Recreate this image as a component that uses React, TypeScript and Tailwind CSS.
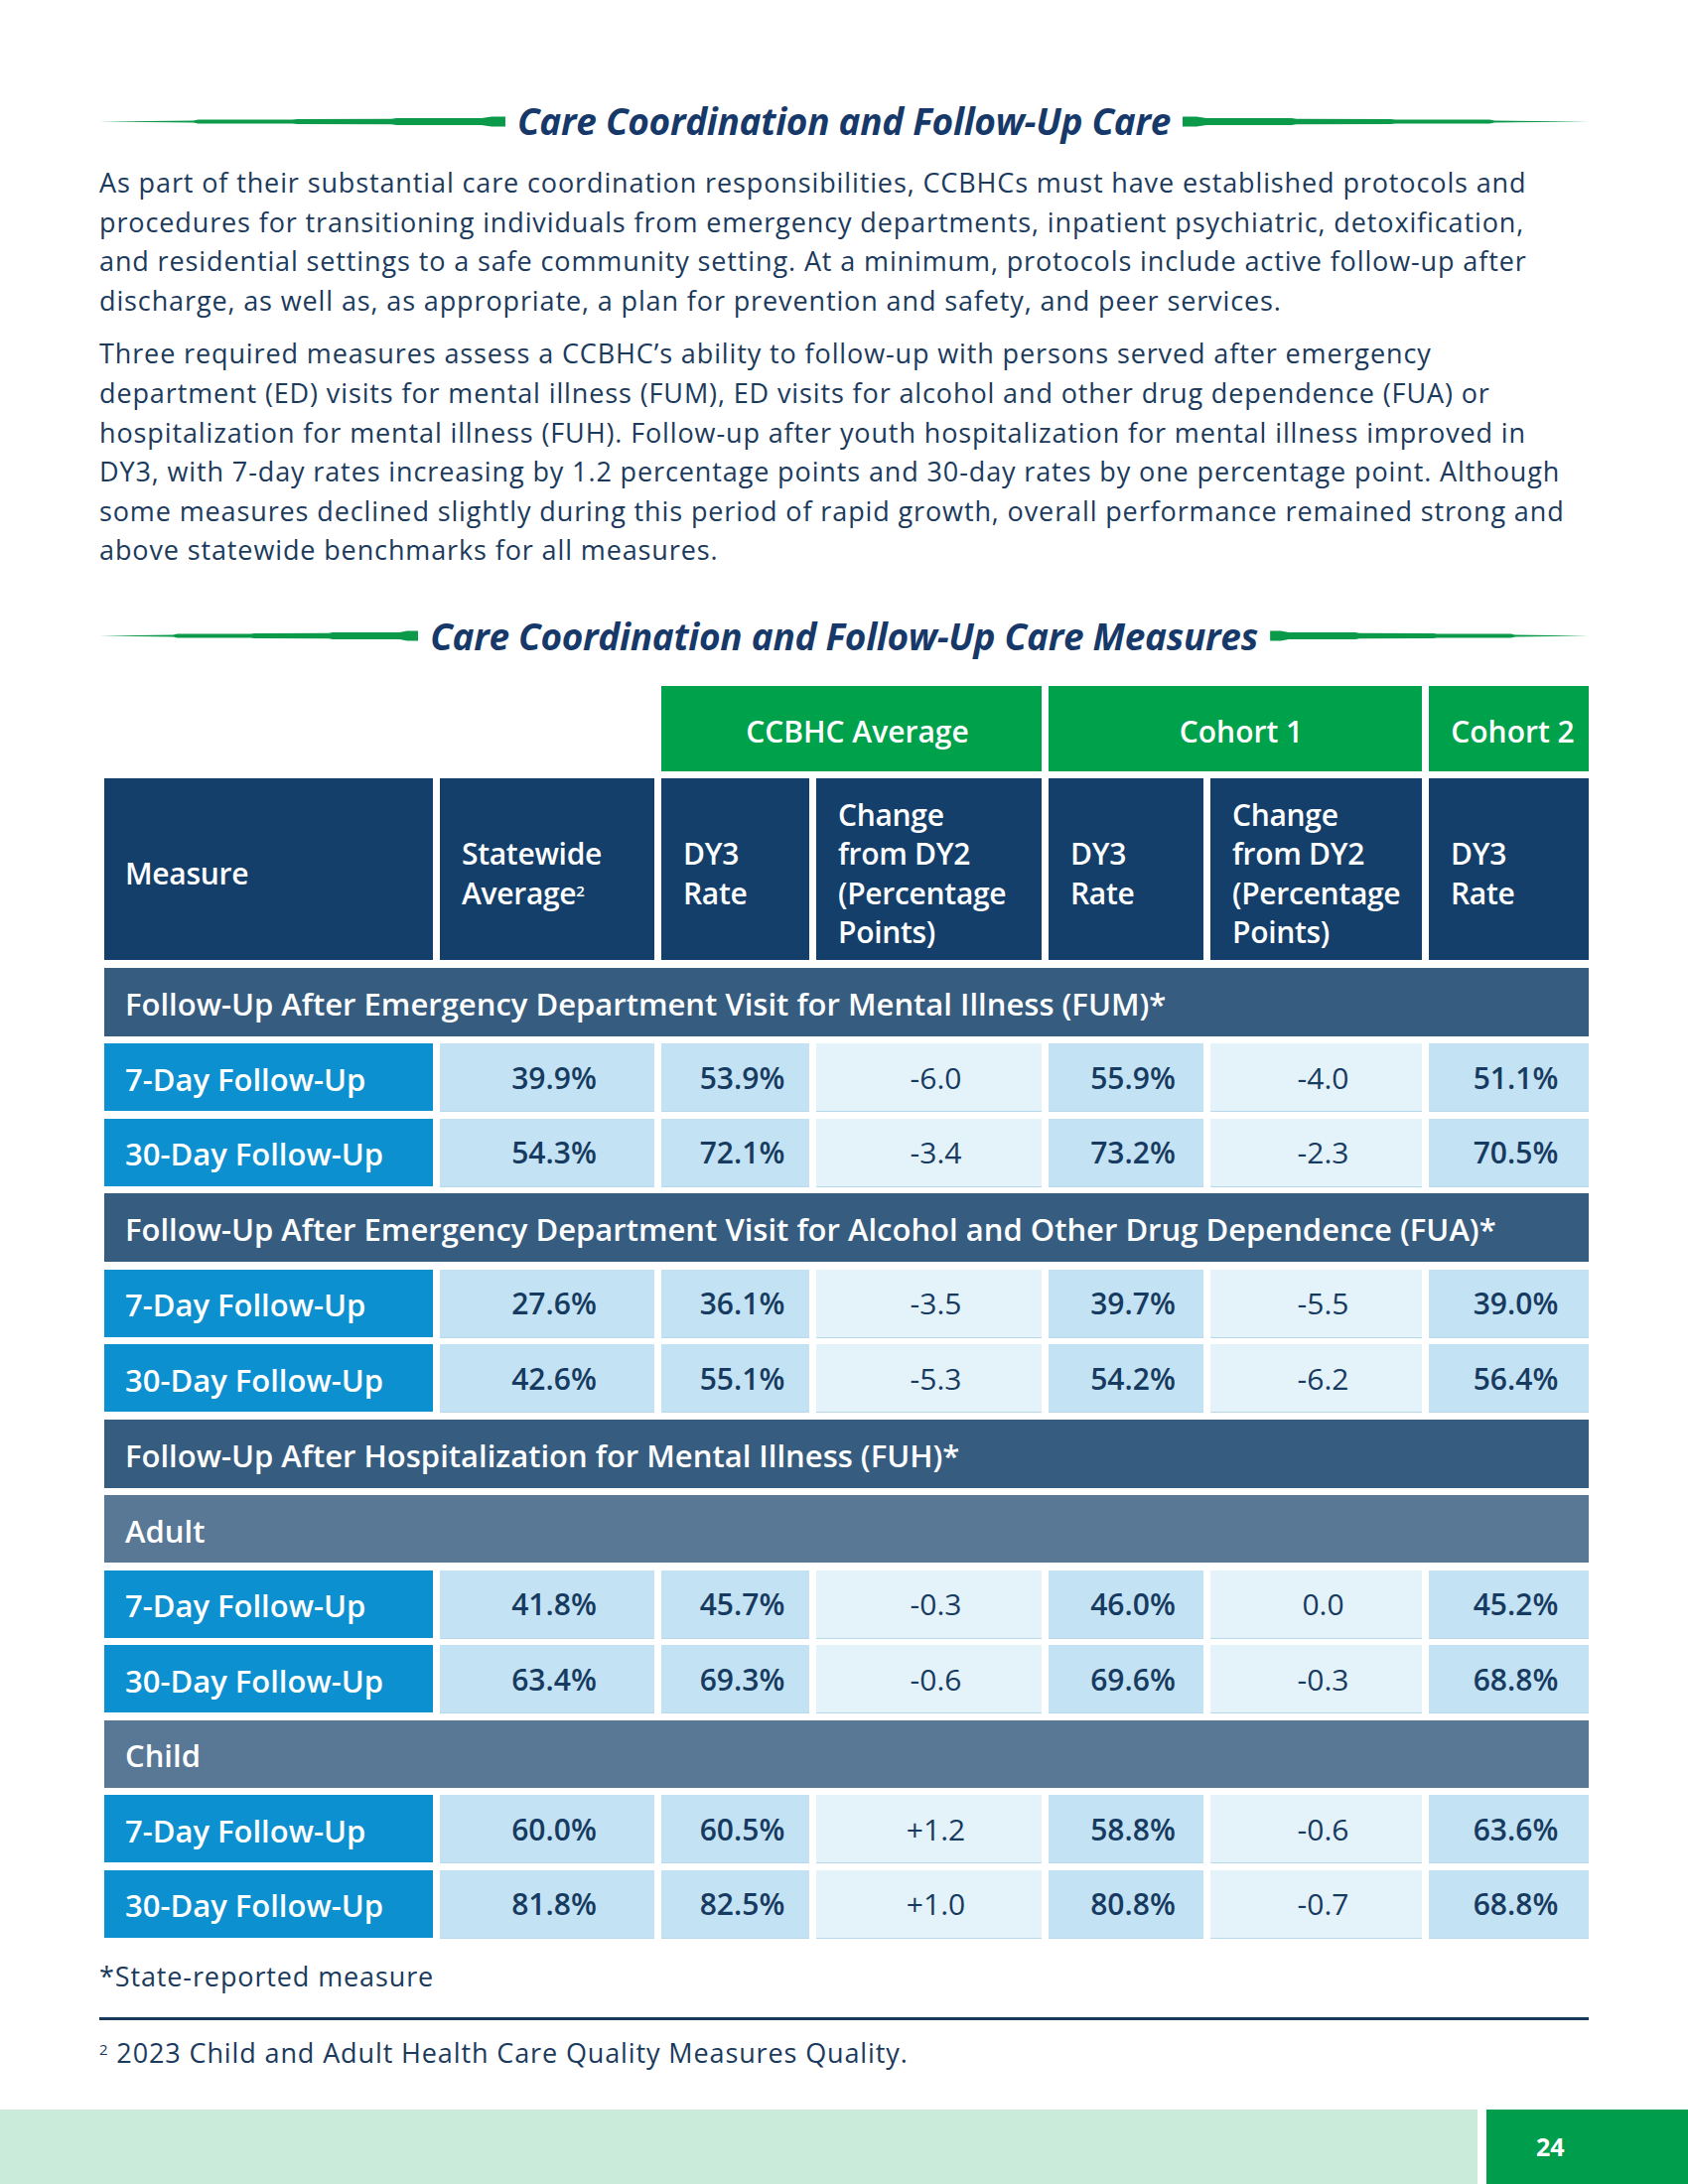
import React from 'react'

type Row = [string, string, string, string, string, string, string]

const para1 = [
    'As part of their substantial care coordination responsibilities, CCBHCs must have established protocols and',
    'procedures for transitioning individuals from emergency departments, inpatient psychiatric, detoxification,',
    'and residential settings to a safe community setting. At a minimum, protocols include active follow-up after',
    'discharge, as well as, as appropriate, a plan for prevention and safety, and peer services.',
]

const para2 = [
    'Three required measures assess a CCBHC’s ability to follow-up with persons served after emergency',
    'department (ED) visits for mental illness (FUM), ED visits for alcohol and other drug dependence (FUA) or',
    'hospitalization for mental illness (FUH). Follow-up after youth hospitalization for mental illness improved in',
    'DY3, with 7-day rates increasing by 1.2 percentage points and 30-day rates by one percentage point. Although',
    'some measures declined slightly during this period of rapid growth, overall performance remained strong and',
    'above statewide benchmarks for all measures.',
]

const sections: { title: string; groups: { sub?: string; rows: Row[] }[] }[] = [
    {
        title: 'Follow-Up After Emergency Department Visit for Mental Illness (FUM)*',
        groups: [{ rows: [
            ['7-Day Follow-Up', '39.9%', '53.9%', '-6.0', '55.9%', '-4.0', '51.1%'],
            ['30-Day Follow-Up', '54.3%', '72.1%', '-3.4', '73.2%', '-2.3', '70.5%'],
        ] }],
    },
    {
        title: 'Follow-Up After Emergency Department Visit for Alcohol and Other Drug Dependence (FUA)*',
        groups: [{ rows: [
            ['7-Day Follow-Up', '27.6%', '36.1%', '-3.5', '39.7%', '-5.5', '39.0%'],
            ['30-Day Follow-Up', '42.6%', '55.1%', '-5.3', '54.2%', '-6.2', '56.4%'],
        ] }],
    },
    {
        title: 'Follow-Up After Hospitalization for Mental Illness (FUH)*',
        groups: [
            { sub: 'Adult', rows: [
                ['7-Day Follow-Up', '41.8%', '45.7%', '-0.3', '46.0%', '0.0', '45.2%'],
                ['30-Day Follow-Up', '63.4%', '69.3%', '-0.6', '69.6%', '-0.3', '68.8%'],
            ] },
            { sub: 'Child', rows: [
                ['7-Day Follow-Up', '60.0%', '60.5%', '+1.2', '58.8%', '-0.6', '63.6%'],
                ['30-Day Follow-Up', '81.8%', '82.5%', '+1.0', '80.8%', '-0.7', '68.8%'],
            ] },
        ],
    },
]

// tapered green rule beside the headings
const Rule = ({ flip }: { flip?: boolean }) => (
    <svg viewBox="0 0 410 11" preserveAspectRatio="none" className={`h-[11px] flex-1 ${flip ? '-scale-x-100' : ''}`}>
        <polygon
            fill="#0A9A4A"
            points="0,5.5 95,4.5 100,3.6 195,3.5 200,2.9 295,2.8 300,2.1 386,2 396,0.5 410,0.5 410,10.5 396,10.5 386,9 300,8.9 295,8.2 200,8.1 195,7.5 100,7.4 95,6.5"
        />
    </svg>
)

const Heading = ({ text }: { text: string }) => (
    <div className="flex h-[48px] items-center gap-[12px]">
        <Rule />
        <h2 className="text-[37px] font-bold italic tracking-[-0.3px] text-[#16396A] whitespace-nowrap">{text}</h2>
        <Rule flip />
    </div>
)

const Cell = ({ v, light }: { v: string; light?: boolean }) => (
    <div className={`flex h-[68px] items-center justify-center pl-[14px] text-[30px] text-[#173B60] shadow-[0_1px_0_#b7d7ea] ${light ? 'bg-[#E4F2FA] font-normal text-[28px]' : 'bg-[#C3E2F4] font-semibold'}`}>
        {v}
    </div>
)

const App = () => {
    return (
        <div className="flex min-h-[2200px] w-[1700px] flex-col bg-white text-[#1B3A5C]" style={{ fontFamily: '"Open Sans", "Noto Sans", sans-serif' }}>
            <div className="px-[100px] pt-[98px]">
                <Heading text="Care Coordination and Follow-Up Care" />
                <div className="mt-[18px] text-[27px] leading-[39.6px] tracking-[0.88px]">
                    <p>
                        {para1.map((l) => <span key={l} className="block whitespace-nowrap">{l}</span>)}
                    </p>
                    <p className="mt-[14px]">
                        {para2.map((l) => <span key={l} className="block whitespace-nowrap">{l}</span>)}
                    </p>
                </div>

                <div className="mt-[43px]">
                    <Heading text="Care Coordination and Follow-Up Care Measures" />
                </div>

                {/* Table */}
                <div className="ml-[5px] mt-[26px] grid grid-cols-[331px_216px_149px_227px_156px_213px_161px] gap-x-[7px] gap-y-[7.5px] text-white">
                    <div className="col-span-2" />
                    <div className="col-span-2 flex h-[86px] items-center justify-center bg-[#00A14B] pl-[12px] pt-[6px] text-[30px] font-semibold">CCBHC Average</div>
                    <div className="col-span-2 flex h-[86px] items-center justify-center bg-[#00A14B] pl-[12px] pt-[6px] text-[30px] font-semibold">Cohort 1</div>
                    <div className="flex h-[86px] items-center justify-center bg-[#00A14B] pl-[8px] pt-[6px] text-[30px] font-semibold">Cohort 2</div>

                    {[
                        ['Measure'],
                        ['Statewide', 'Average'],
                        ['DY3', 'Rate'],
                        ['Change', 'from DY2', '(Percentage', 'Points)'],
                        ['DY3', 'Rate'],
                        ['Change', 'from DY2', '(Percentage', 'Points)'],
                        ['DY3', 'Rate'],
                    ].map((lines, i) => (
                        <div key={i} className={`flex h-[183px] flex-col justify-center bg-[#143F6B] pt-[8px] text-[30px] font-semibold leading-[39.5px] ${i === 0 ? 'pl-[21px]' : 'pl-[22px]'}`}>
                            {lines.map((l, j) => (
                                <span key={j} className="whitespace-nowrap tracking-[-0.3px]">
                                    {l}
                                    {i === 1 && j === 1 && <sup className="text-[15px]">2</sup>}
                                </span>
                            ))}
                        </div>
                    ))}

                    {sections.map((s) => (
                        <React.Fragment key={s.title}>
                            <div className="col-span-7 flex h-[69px] items-center bg-[#365D80] pl-[21px] pt-[3px] text-[31px] font-semibold whitespace-nowrap">{s.title}</div>
                            {s.groups.map((g, gi) => (
                                <React.Fragment key={gi}>
                                    {g.sub && (
                                        <div className="col-span-7 flex h-[68px] items-center bg-[#587896] pl-[21px] pt-[3px] text-[31px] font-semibold">{g.sub}</div>
                                    )}
                                    {g.rows.map((r) => (
                                        <React.Fragment key={r[0]}>
                                            <div className="flex h-[68px] items-center bg-[#0C90CF] pl-[21px] pt-[3px] text-[31px] font-semibold whitespace-nowrap">{r[0]}</div>
                                            <Cell v={r[1]} />
                                            <Cell v={r[2]} />
                                            <Cell v={r[3]} light />
                                            <Cell v={r[4]} />
                                            <Cell v={r[5]} light />
                                            <Cell v={r[6]} />
                                        </React.Fragment>
                                    ))}
                                </React.Fragment>
                            ))}
                        </React.Fragment>
                    ))}
                </div>

                <p className="mt-[19px] text-[27px] leading-[40px] tracking-[0.88px]">*State-reported measure</p>
                <div className="mt-[21px] h-[3px] bg-[#173A5A]" />
                <p className="mt-[13px] text-[27px] leading-[40px] tracking-[0.88px]">
                    <sup className="text-[15px]">2</sup> 2023 Child and Adult Health Care Quality Measures Quality.
                </p>
            </div>

            {/* Footer band */}
            <div className="mt-auto flex h-[75px] gap-[9px]">
                <div className="flex-1 bg-[#CBEBDA]" />
                <div className="flex w-[203px] items-center pl-[50px] bg-[#009D4D] text-[25px] font-bold text-white">24</div>
            </div>
        </div>
    )
}

export default App
